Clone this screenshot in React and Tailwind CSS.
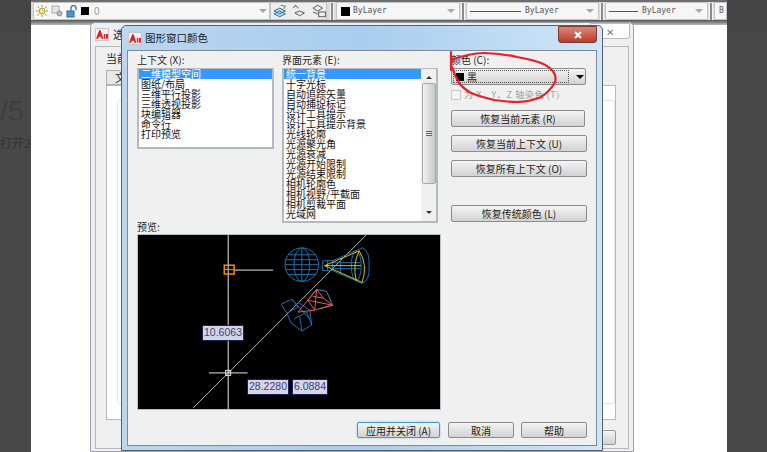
const cjk = { fontFamily: '"Noto Sans CJK SC", "Liberation Sans", sans-serif' };
const mono = { fontFamily: '"DejaVu Sans Mono", monospace' };

const contextItems = ['二维模型空间', '图纸/布局', '三维平行投影', '三维透视投影', '块编辑器', '命令行', '打印预览'];
const elementItems = ['统一背景', '十字光标', '自动追踪矢量', '自动捕捉标记', '设计工具提示', '设计工具提示背景', '光线轮廓', '光源聚光角', '光源衰减', '光源开始限制', '光源结束限制', '相机轮廓色', '相机视野/平截面', '相机剪裁平面', '光域网'];

const AcadLogo = () => (
  <div className="flex items-center justify-center w-[14px] h-[13px] bg-[#f2f2f2] border border-[#c8c8c8] shrink-0">
    <svg width="13" height="11" viewBox="0 0 13 11">
      <path d="M0 10 L3.5 1 L5 1 L8 10 L6 10 L5.4 8 L3 8 L2.3 10 Z" fill="#e01b24" />
      <path d="M8.5 5 h1.2 v5 h-1.2 Z M10.5 5 h2.4 v5 h-2.4 Z" fill="#e01b24" />
    </svg>
  </div>
);

const ListBox = ({ items, className, children }) => (
  <div className={`relative bg-white border-2 border-t-[1px] border-[#b4bac0] overflow-hidden ${className}`}>
    <div className="flex flex-col text-[10px] leading-[10px] text-[#111]">
      {items.map((item, i) => (
        <div key={item} className={`h-[10px] pl-[2px] whitespace-nowrap ${i === 0 ? 'bg-[#3399ff] text-white' : ''}`}>{item}</div>
      ))}
    </div>
    {children}
  </div>
);

const WinButton = ({ children, className = '' }) => (
  <button className={`flex items-center justify-center h-[17px] text-[10px] text-[#222] rounded-[2px] border border-[#8c8c8c] bg-gradient-to-b from-[#f4f4f4] to-[#d2d2d2] shrink-0 ${className}`}>
    {children}
  </button>
);

const Arrow = () => <span className="w-0 h-0 border-x-[4px] border-x-transparent border-t-[4px] border-t-[#a8a8a8]" />;

const LineDrop = ({ label, width, line }) => (
  <div className={`flex items-center h-[18px] bg-[#f6f6f6] border border-[#c4c4c4] rounded-[2px] pl-[3px] pr-[4px] gap-[4px] shrink-0 ${width}`}>
    <span className={`h-px bg-[#555] ${line}`} />
    <span className="flex-1 text-[8px] text-[#555]" style={mono}>{label}</span>
    <Arrow />
  </div>
);

const Grip = () => <span className="w-[4px] h-[17px] mx-[1px] border-x border-[#f5f5f5] bg-[#8a8a8a] shrink-0" />;

const Toolbar = () => (
  <div className="flex flex-col shrink-0">
    <div className="flex items-center h-[20px] bg-[#dcdcdc] border-t-[2px] border-[#6e6e6e] pl-[2px] overflow-hidden">
      <div className="flex items-center h-[18px] w-[237px] shrink-0 bg-[#f7f7f7] border border-[#c4c4c4] pl-[2px] pr-[2px] gap-[3px]">
        <svg width="12" height="12" viewBox="0 0 12 12">
          <circle cx="6" cy="6" r="3" fill="#f5e07a" stroke="#b49a2a" />
          <path d="M6 0v2M6 10v2M0 6h2M10 6h2M1.5 1.5l1.5 1.5M9 9l1.5 1.5M10.5 1.5L9 3M3 9l-1.5 1.5" stroke="#a88f2a" />
        </svg>
        <svg width="12" height="12" viewBox="0 0 12 12">
          <rect x="1" y="1" width="7" height="7" fill="#e6e6e6" stroke="#aaa" />
          <circle cx="8.5" cy="8.5" r="2.5" fill="#bbb" stroke="#888" />
        </svg>
        <svg width="12" height="13" viewBox="0 0 12 13">
          <rect x="1" y="6" width="7" height="6" fill="#4f93cf" stroke="#2a6aa5" />
          <path d="M5 6V3a2.5 2.5 0 015 0v2" fill="none" stroke="#3b7fb8" strokeWidth="1.4" />
        </svg>
        <span className="w-[8px] h-[8px] bg-black" />
        <span className="flex-1 text-[10px] text-[#999] pl-[2px]" style={{ fontFamily: '"Liberation Sans", sans-serif' }}>0</span>
        <Arrow />
      </div>
      <div className="flex items-center h-[18px] w-[57px] shrink-0 gap-[5px] pl-[2px] bg-[#eeeeee] border border-[#c4c4c4]">
        <svg width="15" height="14" viewBox="0 0 15 14" fill="none">
          <path d="M1 10l6-3 6 3-6 3zM1 7l6-3 6 3-6 3z" fill="#bfe0f2" stroke="#276a96" />
          <path d="M8 1l5 1-2 3" stroke="#3a8f3a" />
        </svg>
        <svg width="15" height="14" viewBox="0 0 15 14" fill="none" stroke="#555">
          <path d="M3 9l5-2 5 2-5 3zM3 1l4 3M1 4l3-3" />
        </svg>
        <svg width="15" height="14" viewBox="0 0 15 14" fill="none" stroke="#555">
          <path d="M1 4l5-3 5 3-5 3zM1 8l5 2" />
          <rect x="7" y="8" width="7" height="5" fill="#eee" />
        </svg>
      </div>
      <span className="w-[2px] shrink-0" />
      <Grip />
      <div className="flex items-center h-[18px] w-[124px] ml-[1px] bg-[#f6f6f6] border border-[#c4c4c4] pl-[4px] pr-[4px] gap-[3px] shrink-0">
        <span className="w-[9px] h-[9px] bg-black" />
        <span className="flex-1 text-[8px] text-[#555]" style={mono}>ByLayer</span>
        <Arrow />
      </div>
      <Grip />
      <LineDrop label="ByLayer" width="w-[133px]" line="w-[51px]" />
      <Grip />
      <LineDrop label="ByLayer" width="w-[103px]" line="w-[29px]" />
      <Grip />
      <div className="flex items-center h-[18px] flex-1 bg-[#f6f6f6] border border-[#c4c4c4] pl-[4px] text-[8px] text-[#555]" style={mono}>B</div>
    </div>
    <div className="h-[5px] bg-gradient-to-b from-[#555] to-[#bbb]" />
  </div>
);

const Preview = () => (
  <svg className="block w-[304px] h-[176px] bg-black border border-[#b9bec4]" viewBox="0 0 304 176">
    <g fill="none">
      {/* crosshair + tracking lines */}
      <path d="M90.5 0V176" stroke="#e8e8e8" />
      <path d="M55 175L230 0" stroke="#b5b5b5" />
      <path d="M97 35.5H136" stroke="#e8e8e8" />
      <path d="M71 139.5H110" stroke="#e8e8e8" />
      <rect x="88" y="137" width="5" height="5" stroke="#e8e8e8" />
      <rect x="86.5" y="30.5" width="10" height="9" stroke="#ff9900" strokeWidth="1.4" />
      <path d="M87 35H96" stroke="#ff9900" />
      {/* globe */}
      <g stroke="#1c6fb0">
        <circle cx="165" cy="30" r="17" />
        <ellipse cx="165" cy="30" rx="8" ry="17" />
        <path d="M165 13V47M148 30H182M151 20H179M151 40H179M148.5 25H181.5M148.5 35H181.5" />
        {/* spotlight */}
        <path d="M186 26H196L226 13Q234 16 233 31Q234 46 226 49L196 36H186Z" />
        <ellipse cx="220" cy="31" rx="5" ry="15" />
        <path d="M191 26V36M196 26V36M204 23V39M196 28H224M196 34H224" />
      </g>
      <g stroke="#dcc400">
        <path d="M188 31L223 16Q232 30 226 48L188 31" />
        <path d="M188 31H225" />
        <path d="M223 16Q216 30 220 46" />
      </g>
      {/* camera bits */}
      <g stroke="#1c6fb0">
        <path d="M144 70L155 65L161 73L150 79ZM150 79L154 89L165 97L175 91L173 76L161 68M157 85L170 78L175 91M165 97L163 83M155 65L173 85" />
      </g>
      <g stroke="#3a89b5">
        <path d="M180 55L190 57L196 71L184 74M171 66L180 55" />
      </g>
      <g stroke="#e85b5b">
        <path d="M161 78L171 66L180 55L187 64L196 71L178 76L171 66M161 78L178 76M180 55L178 76M171 66L196 71M176 62L187 64" />
      </g>
    </g>
  </svg>
);

const DimBox = ({ children, className }) => (
  <div className={`absolute h-[16px] flex items-center justify-center bg-[#d5d5e8] border border-[#1d1d5a] text-[10.5px] text-[#3c3c7a] ${className}`} style={{ fontFamily: '"Liberation Sans", sans-serif' }}>
    {children}
  </div>
);

const FrontDialog = () => (
  <div className="absolute left-[121px] top-[25px] w-[482px] h-[426px] flex flex-col rounded-t-[5px] border border-[#56606a] bg-gradient-to-r from-[#bcd6ee] via-[#a9cdee] to-[#cfe5f8] px-[5px] pb-[4px]" style={cjk}>
    <div className="flex items-center h-[24px] shrink-0 relative pl-[1px] gap-[3px]">
      <AcadLogo />
      <span className="text-[10.5px] text-[#222]">图形窗口颜色</span>
      <div className="absolute right-0 top-0 w-[39px] h-[17px] flex items-center justify-center rounded-b-[3px] border border-[#7a3b32] bg-gradient-to-b from-[#d8877a] to-[#b93a26]">
        <svg width="10" height="8" viewBox="0 0 10 8"><path d="M2 1L8 7M8 1L2 7" stroke="#fff" strokeWidth="2" /></svg>
      </div>
    </div>
    <div className="flex-1 flex flex-col bg-[#f0f0f0] border border-[#7f8c98] pl-[9px] pr-[9px] text-[#222]">
      <div className="flex">
        <div className="flex flex-col w-[146px]">
          <div className="text-[10px] h-[17px] leading-[17px]">上下文 (X):</div>
          <ListBox items={contextItems} className="w-[137px] h-[81px]" />
        </div>
        <div className="flex flex-col w-[156px]">
          <div className="text-[10px] h-[17px] leading-[17px]">界面元素 (E):</div>
          <ListBox items={elementItems} className="w-[156px] h-[155px]">
            <div className="absolute right-0 top-0 bottom-0 w-[15px] flex flex-col items-center bg-[#f0f0f0]">
              <span className="mt-[7px] w-0 h-0 border-x-[3px] border-x-transparent border-b-[3px] border-b-[#333]" />
              <div className="mt-[4px] w-[14px] h-[101px] rounded-[2px] border border-[#a8a8a8] bg-gradient-to-r from-[#f2f2f2] to-[#c8c8c8] flex flex-col items-center justify-center gap-[1px]">
                <span className="w-[6px] h-px bg-[#666]" />
                <span className="w-[6px] h-px bg-[#666]" />
                <span className="w-[6px] h-px bg-[#666]" />
              </div>
              <span className="mt-auto mb-[7px] w-0 h-0 border-x-[3px] border-x-transparent border-t-[3px] border-t-[#333]" />
            </div>
          </ListBox>
        </div>
        <div className="flex flex-col ml-[13px] w-[136px]">
          <div className="text-[10px] h-[17px] leading-[17px]">颜色 (C):</div>
          <div className="flex items-center h-[17px] w-[135px] rounded-[2px] border border-[#8c8c8c] bg-gradient-to-b from-[#f4f4f4] to-[#d2d2d2] pl-[1px] pr-[1px]">
            <div className="flex items-center gap-[3px] w-[116px] h-[13px] border border-dotted border-[#555]">
              <span className="w-[8px] h-[8px] bg-black ml-[2px]" />
              <span className="text-[10px] leading-none">黑</span>
            </div>
            <span className="ml-auto w-0 h-0 border-x-[4px] border-x-transparent border-t-[4px] border-t-black" />
          </div>
          <div className="flex items-center gap-[3px] h-[18px] mt-[1px] text-[9px] tracking-[0.6px] text-[#a0a0a0] whitespace-nowrap">
            <span className="w-[10px] h-[10px] border border-[#c8c8c8] bg-[#f4f4f4] shrink-0" />
            为 X、Y、Z 轴染色 (T)
          </div>
          <WinButton className="w-[134px] mt-[6px]">恢复当前元素 (R)</WinButton>
          <WinButton className="w-[136px] mt-[8px]">恢复当前上下文 (U)</WinButton>
          <WinButton className="w-[136px] mt-[8px]">恢复所有上下文 (O)</WinButton>
          <WinButton className="w-[136px] mt-[28px]">恢复传统颜色 (L)</WinButton>
        </div>
      </div>
      <div className="text-[10px] h-[11px] leading-[8px]">预览:</div>
      <div className="relative w-[304px]">
        <Preview />
        <DimBox className="left-[65px] top-[91px] w-[42px]">10.6063</DimBox>
        <DimBox className="left-[110px] top-[145px] w-[42px]">28.2280</DimBox>
        <DimBox className="left-[155px] top-[145px] w-[36px]">6.0884</DimBox>
      </div>
      <div className="flex justify-end mt-[12px]">
        <WinButton className="!h-[16px] w-[83px] !border-[#3a9bd8] shadow-[0_0_2px_#7cc7f0]">应用并关闭 (A)</WinButton>
        <WinButton className="!h-[16px] w-[66px] ml-[8px]">取消</WinButton>
        <WinButton className="!h-[16px] w-[66px] ml-[7px]">帮助</WinButton>
      </div>
    </div>
  </div>
);

const BackDialog = () => (
  <div className="absolute left-[90px] top-[22px] w-[544px] h-[430px] rounded-t-[5px] border border-[#9aa3ab] bg-[#efefef] px-[4px] pb-[2px] flex flex-col" style={cjk}>
    <div className="relative flex items-center h-[23px] gap-[4px] shrink-0">
      <AcadLogo />
      <span className="text-[11px] text-[#222]">选</span>
      <div className="absolute right-[-1px] top-0 w-[40px] h-[16px] bg-white border border-[#bbb] rounded-b-[3px] flex items-center justify-center text-[10px] text-[#777]">✕</div>
    </div>
    <div className="flex-1 border border-[#b8b8b8] flex flex-col pl-[10px] pr-[12px] pt-[3px]">
      <div className="text-[11px] text-[#222] h-[20px]">当前</div>
      <div className="w-[40px] h-[15px] border border-[#b0b0b0] bg-[#e8e8e8] text-[11px] pl-[8px] leading-[13px] text-[#222]">文</div>
      <div className="h-[335px] bg-white border border-[#b8b8b8] pl-[10px] pt-[14px] pb-[15px]">
        <div className="h-full border border-[#e4e4e4] rounded-[3px]" />
      </div>
      <div className="flex justify-end mt-[10px]">
        <div className="w-[40px] h-[15px] border border-[#9a9a9a] rounded-[2px] bg-gradient-to-b from-[#f4f4f4] to-[#d2d2d2]" />
      </div>
    </div>
  </div>
);

export default function App() {
  return (
    <div className="relative w-[767px] h-[452px] overflow-hidden bg-[#484848]">
      {/* dimmed page behind the screenshot */}
      <div className="absolute left-0 right-0 top-0 h-[32px] bg-[#444444]" />
      <span className="absolute left-0 top-[90px] text-[29px] text-[#3e3e3e]" style={{ fontFamily: '"Liberation Sans", sans-serif' }}>/5</span>
      <span className="absolute left-0 top-[134px] text-[12px] text-[#333]" style={cjk}>打开2</span>
      <div className="relative ml-[31px] w-[696px] h-full flex flex-col bg-white">
        <Toolbar />
      </div>
      <BackDialog />
      <FrontDialog />
      {/* red hand drawn annotation */}
      <svg className="absolute left-0 top-0 pointer-events-none" width="767" height="452" viewBox="0 0 767 452" fill="none">
        <path d="M451 52V70M451 60C462 56 474 53 484 53C496 53 508 55 517 57C528 59 536 61 541 63C549 66 553 70 555 75C556 79 556 81 554 84C551 89 547 93 541 97C534 100 526 102 517 102C509 102 501 101 494 100C486 98 478 96 471 93C466 90 462 87 459 83C456 78 454 73 452 67" stroke="#ee1c25" strokeWidth="2.2" strokeLinecap="round" />
      </svg>
    </div>
  );
}
